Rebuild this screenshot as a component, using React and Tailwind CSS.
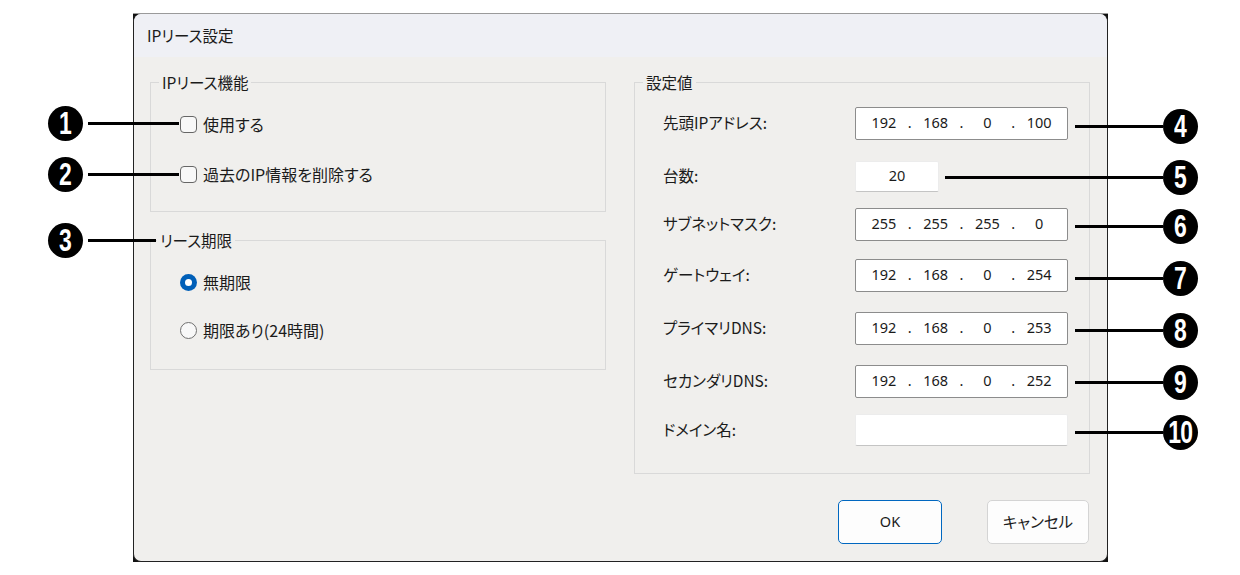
import React from "react";

const JP = "font-['Noto_Sans_CJK_JP','Noto_Sans',sans-serif] [font-feature-settings:'palt']";

function Checkbox() {
  return <span className="inline-block w-[17px] h-[17px] rounded-[4px] border border-[#666] bg-[#f8f8f8] shrink-0" />;
}

function Radio({ checked }) {
  if (checked)
    return (
      <span className="flex items-center justify-center w-[17px] h-[17px] rounded-full bg-[#005fb8] shrink-0">
        <span className="w-[7px] h-[7px] rounded-full bg-white" />
      </span>
    );
  return <span className="inline-block w-[17px] h-[17px] rounded-full border border-[#707070] bg-[#f8f8f8] shrink-0" />;
}

function IpField({ parts, strong = true }) {
  return (
    <div
      className={`flex items-center w-[213px] h-[33px] px-[10px] bg-white rounded-[2px] border ${
        strong ? "border-[#8c8c8c]" : "border-[#ececec] border-b-[#c4c4c4]"
      } font-['Noto_Sans',sans-serif] text-[14.5px] text-[#1a1a1a]`}
    >
      {parts.map((p, i) => (
        <React.Fragment key={i}>
          <span className="w-[36px] text-center">{p}</span>
          {i < 3 && <span className="w-[16px] text-center">.</span>}
        </React.Fragment>
      ))}
    </div>
  );
}

function Row({ label, children, mt }) {
  return (
    <div className={`flex items-center h-[32px] ${mt}`}>
      <div className="w-[220px] pl-[28px] text-[15.5px]">{label}</div>
      {children}
    </div>
  );
}

function Badge({ n, left, top }) {
  return (
    <div
      className="absolute w-[35px] h-[35px] rounded-full bg-black flex items-center justify-center"
      style={{ left, top }}
    >
      <span className="inline-block scale-x-[0.74] text-white font-bold text-[31px] leading-none font-['Liberation_Sans',sans-serif] tracking-[-1px]">
        {n}
      </span>
    </div>
  );
}

function Line({ left, top, width }) {
  return <div className="absolute h-[3px] bg-black" style={{ left, top, width }} />;
}

export default function App() {
  return (
    <div className={`relative w-[1240px] h-[575px] bg-white overflow-hidden ${JP} text-[15px] text-[#1b1b1b]`}>
      <div className="pt-[13px] pl-[133px]">
        <div className="w-[975px] h-[549px] bg-[#111] border-t border-t-[#9a9a9a]">
          <div className="w-full h-full rounded-[8px] overflow-hidden bg-[#f0efed] border-x border-b border-[#222] flex flex-col">
            <div className="h-[43px] bg-[#eff0f5] flex items-center pl-[13px] leading-none text-[15.5px]">IPリース設定</div>
            <div className="flex pl-[16px] pt-[25px] gap-[28px]">
              <div className="w-[456px] flex flex-col text-[16px]">
                <div className="h-[130px] border border-[#d9d9d9]">
                  <div className="-mt-[12px] ml-[8px] px-[3px] w-fit bg-[#f0efed] leading-[22px] text-[15.5px]">IPリース機能</div>
                  <div className="flex items-center gap-[6px] pl-[29px] mt-[20px] h-[22px]">
                    <Checkbox />
                    <span>使用する</span>
                  </div>
                  <div className="flex items-center gap-[6px] pl-[29px] mt-[28px] h-[22px]">
                    <Checkbox />
                    <span>過去のIP情報を削除する</span>
                  </div>
                </div>
                <div className="h-[130px] border border-[#d9d9d9] mt-[28px]">
                  <div className="-mt-[12px] ml-[6px] px-[3px] w-fit bg-[#f0efed] leading-[22px] text-[15.5px]">リース期限</div>
                  <div className="flex items-center gap-[6px] pl-[29px] mt-[20px] h-[22px]">
                    <Radio checked />
                    <span>無期限</span>
                  </div>
                  <div className="flex items-center gap-[6px] pl-[29px] mt-[26px] h-[22px]">
                    <Radio />
                    <span>期限あり(24時間)</span>
                  </div>
                </div>
              </div>
              <div className="w-[456px] h-[392px] border border-[#d9d9d9] shrink-0">
                <div className="-mt-[12px] ml-[8px] px-[3px] w-fit bg-[#f0efed] leading-[22px] text-[15.5px]">設定値</div>
                <Row label="先頭IPアドレス:" mt="mt-[14px]">
                  <IpField parts={["192", "168", "0", "100"]} />
                </Row>
                <Row label="台数:" mt="mt-[21px]">
                  <div className="w-[84px] h-[31px] bg-white border border-[#ececec] border-b-[#c4c4c4] rounded-[2px] flex items-center justify-center font-['Noto_Sans',sans-serif] text-[14.5px]">
                    20
                  </div>
                </Row>
                <Row label="サブネットマスク:" mt="mt-[16px]">
                  <IpField parts={["255", "255", "255", "0"]} />
                </Row>
                <Row label="ゲートウェイ:" mt="mt-[19px]">
                  <IpField parts={["192", "168", "0", "254"]} />
                </Row>
                <Row label="プライマリDNS:" mt="mt-[21px]">
                  <IpField parts={["192", "168", "0", "253"]} />
                </Row>
                <Row label="セカンダリDNS:" mt="mt-[21px]">
                  <IpField parts={["192", "168", "0", "252"]} />
                </Row>
                <Row label="ドメイン名:" mt="mt-[17px]">
                  <div className="w-[213px] h-[32px] bg-white border border-[#ececec] border-b-[#c4c4c4] rounded-[2px]" />
                </Row>
              </div>
            </div>
            <div className="flex justify-end gap-[45px] pr-[18px] mt-[26px]">
              <div className="w-[104px] h-[44px] rounded-[5px] border-[1.5px] border-[#0067c0] bg-[#fdfdfd] flex items-center justify-center font-['Noto_Sans',sans-serif] text-[14.5px]">
                OK
              </div>
              <div className="w-[102px] h-[44px] rounded-[5px] border border-[#d4d4d4] bg-[#fdfdfd] flex items-center justify-center text-[15.5px]">
                キャンセル
              </div>
            </div>
          </div>
        </div>
      </div>

      <Line left={88} top={122} width={91} />
      <Line left={88} top={173} width={91} />
      <Line left={88} top={239} width={68} />
      <Badge n="1" left={48} top={106} />
      <Badge n="2" left={48} top={157} />
      <Badge n="3" left={48} top={223} />

      <Line left={1075} top={125} width={88} />
      <Line left={945} top={176} width={218} />
      <Line left={1075} top={225} width={88} />
      <Line left={1075} top={277} width={88} />
      <Line left={1075} top={329} width={88} />
      <Line left={1075} top={381} width={88} />
      <Line left={1075} top={431} width={88} />
      <Badge n="4" left={1163} top={109} />
      <Badge n="5" left={1163} top={160} />
      <Badge n="6" left={1163} top={209} />
      <Badge n="7" left={1163} top={261} />
      <Badge n="8" left={1163} top={313} />
      <Badge n="9" left={1163} top={365} />
      <Badge n="10" left={1163} top={415} />
    </div>
  );
}
